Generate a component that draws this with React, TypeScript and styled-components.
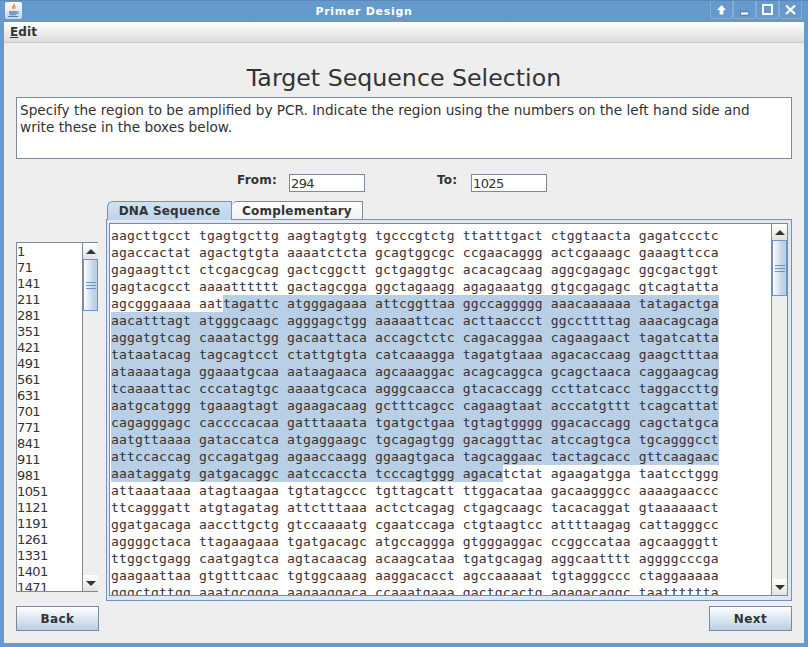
import React from "react";
import styled, { createGlobalStyle } from "styled-components";

const GlobalStyle = createGlobalStyle`
  html, body {
    margin: 0;
    padding: 0;
    background: #6699cc;
  }
`;

const SANS = `"DejaVu Sans", sans-serif`;
const MONO = `"DejaVu Sans Mono", monospace`;
const INK = "#333333";
const LINE = "#7a8a9f";

const SEQUENCE = [
  "aagcttgcct tgagtgcttg aagtagtgtg tgcccgtctg ttatttgact ctggtaacta gagatccctc",
  "agaccactat agactgtgta aaaatctcta gcagtggcgc ccgaacaggg actcgaaagc gaaagttcca",
  "gagaagttct ctcgacgcag gactcggctt gctgaggtgc acacagcaag aggcgagagc ggcgactggt",
  "gagtacgcct aaaatttttt gactagcgga ggctagaagg agagaaatgg gtgcgagagc gtcagtatta",
  "agcgggaaaa aattagattc atgggagaaa attcggttaa ggccaggggg aaacaaaaaa tatagactga",
  "aacatttagt atgggcaagc agggagctgg aaaaattcac acttaaccct ggccttttag aaacagcaga",
  "aggatgtcag caaatactgg gacaattaca accagctctc cagacaggaa cagaagaact tagatcatta",
  "tataatacag tagcagtcct ctattgtgta catcaaagga tagatgtaaa agacaccaag gaagctttaa",
  "ataaaataga ggaaatgcaa aataagaaca agcaaaggac acagcaggca gcagctaaca caggaagcag",
  "tcaaaattac cccatagtgc aaaatgcaca agggcaacca gtacaccagg ccttatcacc taggaccttg",
  "aatgcatggg tgaaagtagt agaagacaag gctttcagcc cagaagtaat acccatgttt tcagcattat",
  "cagagggagc caccccacaa gatttaaata tgatgctgaa tgtagtgggg ggacaccagg cagctatgca",
  "aatgttaaaa gataccatca atgaggaagc tgcagagtgg gacaggttac atccagtgca tgcagggcct",
  "attccaccag gccagatgag agaaccaagg ggaagtgaca tagcaggaac tactagcacc gttcaagaac",
  "aaataggatg gatgacaggc aatccaccta tcccagtggg agacatctat agaagatgga taatcctggg",
  "attaaataaa atagtaagaa tgtatagccc tgttagcatt ttggacataa gacaagggcc aaaagaaccc",
  "ttcagggatt atgtagatag attctttaaa actctcagag ctgagcaagc tacacaggat gtaaaaaact",
  "ggatgacaga aaccttgctg gtccaaaatg cgaatccaga ctgtaagtcc attttaagag cattagggcc",
  "aggggctaca ttagaagaaa tgatgacagc atgccaggga gtgggaggac ccggccataa agcaagggtt",
  "ttggctgagg caatgagtca agtacaacag acaagcataa tgatgcagag aggcaatttt aggggcccga",
  "gaagaattaa gtgtttcaac tgtggcaaag aaggacacct agccaaaaat tgtagggccc ctaggaaaaa",
  "gggctgttgg aaatgcggga aagaaggaca ccaaatgaaa gactgcactg agagacaggc taatttttta",
];

const LINE_NUMBERS = Array.from({ length: 22 }, (_, i) => String(1 + i * 70));

// selected range: row 4 col 14 through row 14 col 49
const SEL_START = { row: 4, col: 14 };
const SEL_END = { row: 14, col: 49 };

const Window = styled.div`
  width: 808px;
  height: 647px;
  display: flex;
  flex-direction: column;
  background: #6699cc;
  box-sizing: border-box;
  padding: 0 4px 4px;
  overflow: hidden;
  font-family: ${SANS};
  color: ${INK};
`;

const TitleBar = styled.div`
  height: 22px;
  flex: none;
  display: flex;
  align-items: flex-start;
  margin: 0 -4px;
  padding: 1px 6px 0 5px;
  box-sizing: border-box;
  border-top: 1px solid #5a88b8;
`;

const AppIcon = styled.div`
  width: 17px;
  height: 17px;
  flex: none;
  background: linear-gradient(#ffffff, #c8d4e0);
  border-radius: 2px;
  display: flex;
  align-items: center;
  justify-content: center;
`;

const WindowTitle = styled.div`
  flex: 1;
  padding: 2px 4px 0 0;
  text-align: center;
  color: #ffffff;
  font-size: 11px;
  font-weight: 700;
  letter-spacing: 0.7px;
  line-height: 16px;
`;

const WindowButtons = styled.div`
  display: flex;
  flex: none;
`;

const WindowButton = styled.div`
  width: 23px;
  height: 18px;
  margin-top: -1px;
  box-sizing: border-box;
  border: 1px solid #87acd4;
  border-top: none;
  border-radius: 0 0 3px 3px;
  display: flex;
  align-items: center;
  justify-content: center;
`;

const Body = styled.div`
  flex: 1;
  display: flex;
  flex-direction: column;
  background: #eeeeee;
  min-height: 0;
`;

const MenuBar = styled.div`
  height: 21px;
  flex: none;
  box-sizing: border-box;
  background: linear-gradient(#ffffff, #dcdcdc);
  border-bottom: 1px solid #c8c8c8;
  padding-left: 6px;
  font-size: 12px;
  font-weight: 700;
  letter-spacing: 0.1px;
  line-height: 20px;
`;

const Mnemonic = styled.span`
  text-decoration: underline;
`;

const Content = styled.div`
  flex: 1;
  display: flex;
  flex-direction: column;
  padding: 0 12px;
  min-height: 0;
`;

const Heading = styled.h1`
  margin: 0;
  height: 54px;
  flex: none;
  display: flex;
  align-items: center;
  justify-content: center;
  padding-top: 16px;
  box-sizing: border-box;
  font-size: 23.7px;
  font-weight: 400;
  color: ${INK};
`;

const Instructions = styled.div`
  height: 62px;
  flex: none;
  box-sizing: border-box;
  background: #ffffff;
  border: 1px solid ${LINE};
  padding: 4px 3px;
  font-size: 13.66px;
  line-height: 17px;
  white-space: pre-line;
`;

const RangeRow = styled.div`
  height: 42px;
  flex: none;
  display: flex;
  align-items: flex-start;
  padding: 15px 0 0 221px;
  box-sizing: border-box;
`;

const RangeLabel = styled.label<{ $width: number }>`
  width: ${(p) => p.$width}px;
  flex: none;
  font-size: 12px;
  font-weight: 700;
  line-height: 13px;
  letter-spacing: 0.25px;
`;

const RangeInput = styled.div<{ $gapAfter?: number }>`
  width: 76px;
  height: 18px;
  flex: none;
  box-sizing: border-box;
  margin-right: ${(p) => p.$gapAfter ?? 0}px;
  background: #ffffff;
  border: 1px solid ${LINE};
  padding-left: 1px;
  font-size: 13px;
  letter-spacing: -0.6px;
  line-height: 18px;
`;

const Columns = styled.div`
  height: 400px;
  flex: none;
  display: flex;
  gap: 8px;
`;

const ListPanel = styled.div`
  width: 82px;
  height: 350px;
  flex: none;
  margin-top: 41px;
  box-sizing: border-box;
  display: flex;
  background: #ffffff;
  border: 1px solid ${LINE};
  border-right: none;
  overflow: hidden;
`;

const NumberColumn = styled.div`
  flex: 1;
  overflow: hidden;
  padding-top: 1px;
  font-size: 13px;
  letter-spacing: -0.6px;
  line-height: 16px;
`;

const ScrollBar = styled.div`
  width: 16px;
  flex: none;
  display: flex;
  flex-direction: column;
  background: #eeeeee;
  box-sizing: border-box;
  border-left: 1px solid ${LINE};
`;

const ScrollButton = styled.div`
  height: 16px;
  flex: none;
  box-sizing: border-box;
  display: flex;
  align-items: center;
  justify-content: center;
  background: linear-gradient(#ffffff, #e2e2e2);
`;

const ArrowUp = styled.div`
  width: 0;
  height: 0;
  border-left: 5px solid transparent;
  border-right: 5px solid transparent;
  border-bottom: 5px solid ${INK};
`;

const ArrowDown = styled.div`
  width: 0;
  height: 0;
  border-left: 5px solid transparent;
  border-right: 5px solid transparent;
  border-top: 5px solid ${INK};
`;

const ScrollThumb = styled.div<{ $height: number }>`
  height: ${(p) => p.$height}px;
  flex: none;
  box-sizing: border-box;
  border: 1px solid #6f94c4;
  background: linear-gradient(90deg, #ffffff, #c4d6ea 65%, #b8cfe5);
  display: flex;
  align-items: center;
  justify-content: center;
`;

const Grip = styled.div`
  width: 10px;
  height: 7px;
  border-top: 1px solid #6f94c4;
  border-bottom: 1px solid #6f94c4;
  box-sizing: border-box;

  &::after {
    content: "";
    display: block;
    height: 1px;
    margin-top: 2px;
    background: #6f94c4;
  }
`;

const ScrollTrack = styled.div`
  flex: 1;
  background: #eeeeee;
`;

const TabArea = styled.div`
  flex: 1;
  min-width: 0;
  display: flex;
  flex-direction: column;
`;

const TabStrip = styled.div`
  height: 18px;
  flex: none;
  display: flex;
  padding-left: 1px;
`;

const Tab = styled.div<{ $active?: boolean }>`
  width: ${(p) => (p.$active ? 125 : 131)}px;
  height: ${(p) => (p.$active ? 19 : 18)}px;
  box-sizing: border-box;
  border: 1px solid ${(p) => (p.$active ? "#6f94c4" : LINE)};
  border-bottom: none;
  border-left-width: ${(p) => (p.$active ? 1 : 0)}px;
  border-radius: ${(p) => (p.$active ? "6px" : "5px")} 0 0 0;
  background: ${(p) =>
    p.$active ? "linear-gradient(#d2e1f2, #bdd3ea)" : "linear-gradient(#ffffff, #f0f0f0)"};
  text-align: center;
  font-size: 12px;
  font-weight: 700;
  line-height: 19px;
  letter-spacing: 0.2px;
  position: relative;
  z-index: ${(p) => (p.$active ? 1 : 0)};
`;

const TabPane = styled.div`
  height: 382px;
  flex: none;
  box-sizing: border-box;
  border: 1px solid #6f94c4;
  background: #dfe8f2;
  padding: 3px 3px 4px 2px;
  display: flex;
`;

const SequenceBox = styled.div`
  flex: 1;
  min-width: 0;
  display: flex;
  background: #ffffff;
  border: 1px solid ${LINE};
  overflow: hidden;
`;

const SequenceText = styled.div`
  flex: 1;
  min-width: 0;
  overflow: hidden;
  padding: 3px 0 0 1px;
`;

const SequenceRow = styled.div`
  height: 17px;
  font-family: ${MONO};
  font-size: 13px;
  line-height: 17px;
  letter-spacing: 0.17px;
  white-space: pre;
`;

const Selected = styled.span`
  display: inline-block;
  height: 17px;
  background: #b8cfe5;
  vertical-align: top;
`;

const Footer = styled.div`
  flex: 1;
  display: flex;
  justify-content: space-between;
  padding-top: 5px;
`;

const ActionButton = styled.button`
  width: 83px;
  height: 25px;
  padding: 0;
  box-sizing: border-box;
  border: 1px solid ${LINE};
  background: linear-gradient(#ffffff, #b8cfe5);
  color: ${INK};
  font-family: ${SANS};
  font-size: 12px;
  font-weight: 700;
  letter-spacing: 0.4px;
`;

const JavaIcon = () => (
  <svg width="13" height="15" viewBox="0 0 13 15">
    <path d="M7 1c1 2-2 3-1 5" fill="none" stroke="#e8762c" strokeWidth="1.4" />
    <path d="M9 3c-1 1-2 2-1 3" fill="none" stroke="#e8762c" strokeWidth="1" />
    <path d="M2 8h8v2.5c0 1-1 2-2 2H4c-1 0-2-1-2-2z" fill="#7b9cc0" />
    <path d="M10 8.5h1.5v2H10" fill="none" stroke="#7b9cc0" />
    <path d="M1 13.5h10" stroke="#5a7fa6" strokeWidth="1" />
  </svg>
);

const WindowGlyph = ({ kind }: { kind: "up" | "min" | "max" | "close" }) => (
  <svg width="15" height="14" viewBox="0 0 15 14">
    {kind === "up" && <path d="M7.5 2 12 7H9.5V11.5H5.5V7H3z" fill="#ffffff" />}
    {kind === "min" && <rect x="3.5" y="9" width="8" height="3" fill="#ffffff" stroke="#2f5a88" strokeWidth="0.6" />}
    {kind === "max" && (
      <rect x="3" y="2" width="9" height="9" fill="none" stroke="#ffffff" strokeWidth="2" />
    )}
    {kind === "close" && (
      <path d="M3 2.5l9 8.5M12 2.5l-9 8.5" fill="none" stroke="#ffffff" strokeWidth="2.2" />
    )}
  </svg>
);

const renderRow = (text: string, row: number) => {
  if (row < SEL_START.row || row > SEL_END.row) return text;
  const from = row === SEL_START.row ? SEL_START.col : 0;
  const to = row === SEL_END.row ? SEL_END.col : text.length;
  return (
    <>
      {text.slice(0, from)}
      <Selected>{text.slice(from, to)}</Selected>
      {text.slice(to)}
    </>
  );
};

export default function App() {
  return (
    <Window>
      <GlobalStyle />
      <TitleBar>
        <AppIcon>
          <JavaIcon />
        </AppIcon>
        <WindowTitle>Primer Design</WindowTitle>
        <WindowButtons>
          <WindowButton>
            <WindowGlyph kind="up" />
          </WindowButton>
          <WindowButton>
            <WindowGlyph kind="min" />
          </WindowButton>
          <WindowButton>
            <WindowGlyph kind="max" />
          </WindowButton>
          <WindowButton>
            <WindowGlyph kind="close" />
          </WindowButton>
        </WindowButtons>
      </TitleBar>
      <Body>
        <MenuBar>
          <Mnemonic>E</Mnemonic>dit
        </MenuBar>
        <Content>
          <Heading>Target Sequence Selection</Heading>
          <Instructions>
            {"Specify the region to be amplified by PCR. Indicate the region using the numbers on the left hand side and\nwrite these in the boxes below."}
          </Instructions>
          <RangeRow>
            <RangeLabel $width={52}>From:</RangeLabel>
            <RangeInput $gapAfter={72}>294</RangeInput>
            <RangeLabel $width={34}>To:</RangeLabel>
            <RangeInput>1025</RangeInput>
          </RangeRow>
          <Columns>
            <ListPanel>
              <NumberColumn>
                {LINE_NUMBERS.map((n) => (
                  <div key={n}>{n}</div>
                ))}
              </NumberColumn>
              <ScrollBar>
                <ScrollButton>
                  <ArrowUp />
                </ScrollButton>
                <ScrollThumb $height={52}>
                  <Grip />
                </ScrollThumb>
                <ScrollTrack />
                <ScrollButton>
                  <ArrowDown />
                </ScrollButton>
              </ScrollBar>
            </ListPanel>
            <TabArea>
              <TabStrip>
                <Tab $active>DNA Sequence</Tab>
                <Tab>Complementary</Tab>
              </TabStrip>
              <TabPane>
                <SequenceBox>
                  <SequenceText>
                    {SEQUENCE.map((line, i) => (
                      <SequenceRow key={i}>{renderRow(line, i)}</SequenceRow>
                    ))}
                  </SequenceText>
                  <ScrollBar>
                    <ScrollButton>
                      <ArrowUp />
                    </ScrollButton>
                    <ScrollThumb $height={56}>
                      <Grip />
                    </ScrollThumb>
                    <ScrollTrack />
                    <ScrollButton>
                      <ArrowDown />
                    </ScrollButton>
                  </ScrollBar>
                </SequenceBox>
              </TabPane>
            </TabArea>
          </Columns>
          <Footer>
            <ActionButton>Back</ActionButton>
            <ActionButton>Next</ActionButton>
          </Footer>
        </Content>
      </Body>
    </Window>
  );
}
